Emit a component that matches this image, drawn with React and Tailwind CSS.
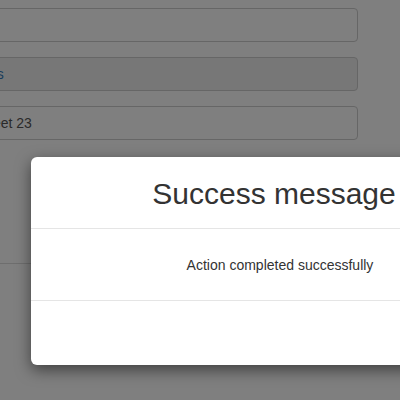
export default function App() {
  const font = { fontFamily: '"Liberation Sans", Arial, sans-serif' };
  return (
    <div className="relative w-[400px] h-[400px] overflow-hidden bg-white" style={font}>
      <div className="ml-[-38px] w-[396px] pt-[8px] flex flex-col gap-[15px] h-[264px] border-b border-[#ddd]">
        <div className="h-[34px] rounded-[4px] border border-[#ccc] bg-white"></div>
        <div className="h-[34px] rounded-[4px] border border-[#ccc] bg-[#eee] flex items-center pl-[12px] text-[14px] text-[#337ab7]">Cats</div>
        <div className="h-[34px] rounded-[4px] border border-[#ccc] bg-white flex items-center pl-[12px] text-[14px] text-[#555]">Street 23</div>
      </div>
      <div className="absolute inset-0 bg-black/50"></div>
      <div className="absolute left-[31px] top-[157px] w-[500px] h-[208px] bg-white rounded-[6px] shadow-[0_5px_15px_rgba(0,0,0,0.5)] flex flex-col text-[#333]">
        <div className="h-[72px] border-b border-[#e5e5e5] flex items-center justify-center pr-[14px]">
          <div className="text-[30px] leading-[33px] mt-[1px]">Success message</div>
        </div>
        <div className="h-[72px] border-b border-[#e5e5e5] flex items-center justify-center pr-[2px]">
          <div className="text-[14px] leading-[20px] mt-[1px]">Action completed successfully</div>
        </div>
        <div className="flex-1"></div>
      </div>
    </div>
  );
}
